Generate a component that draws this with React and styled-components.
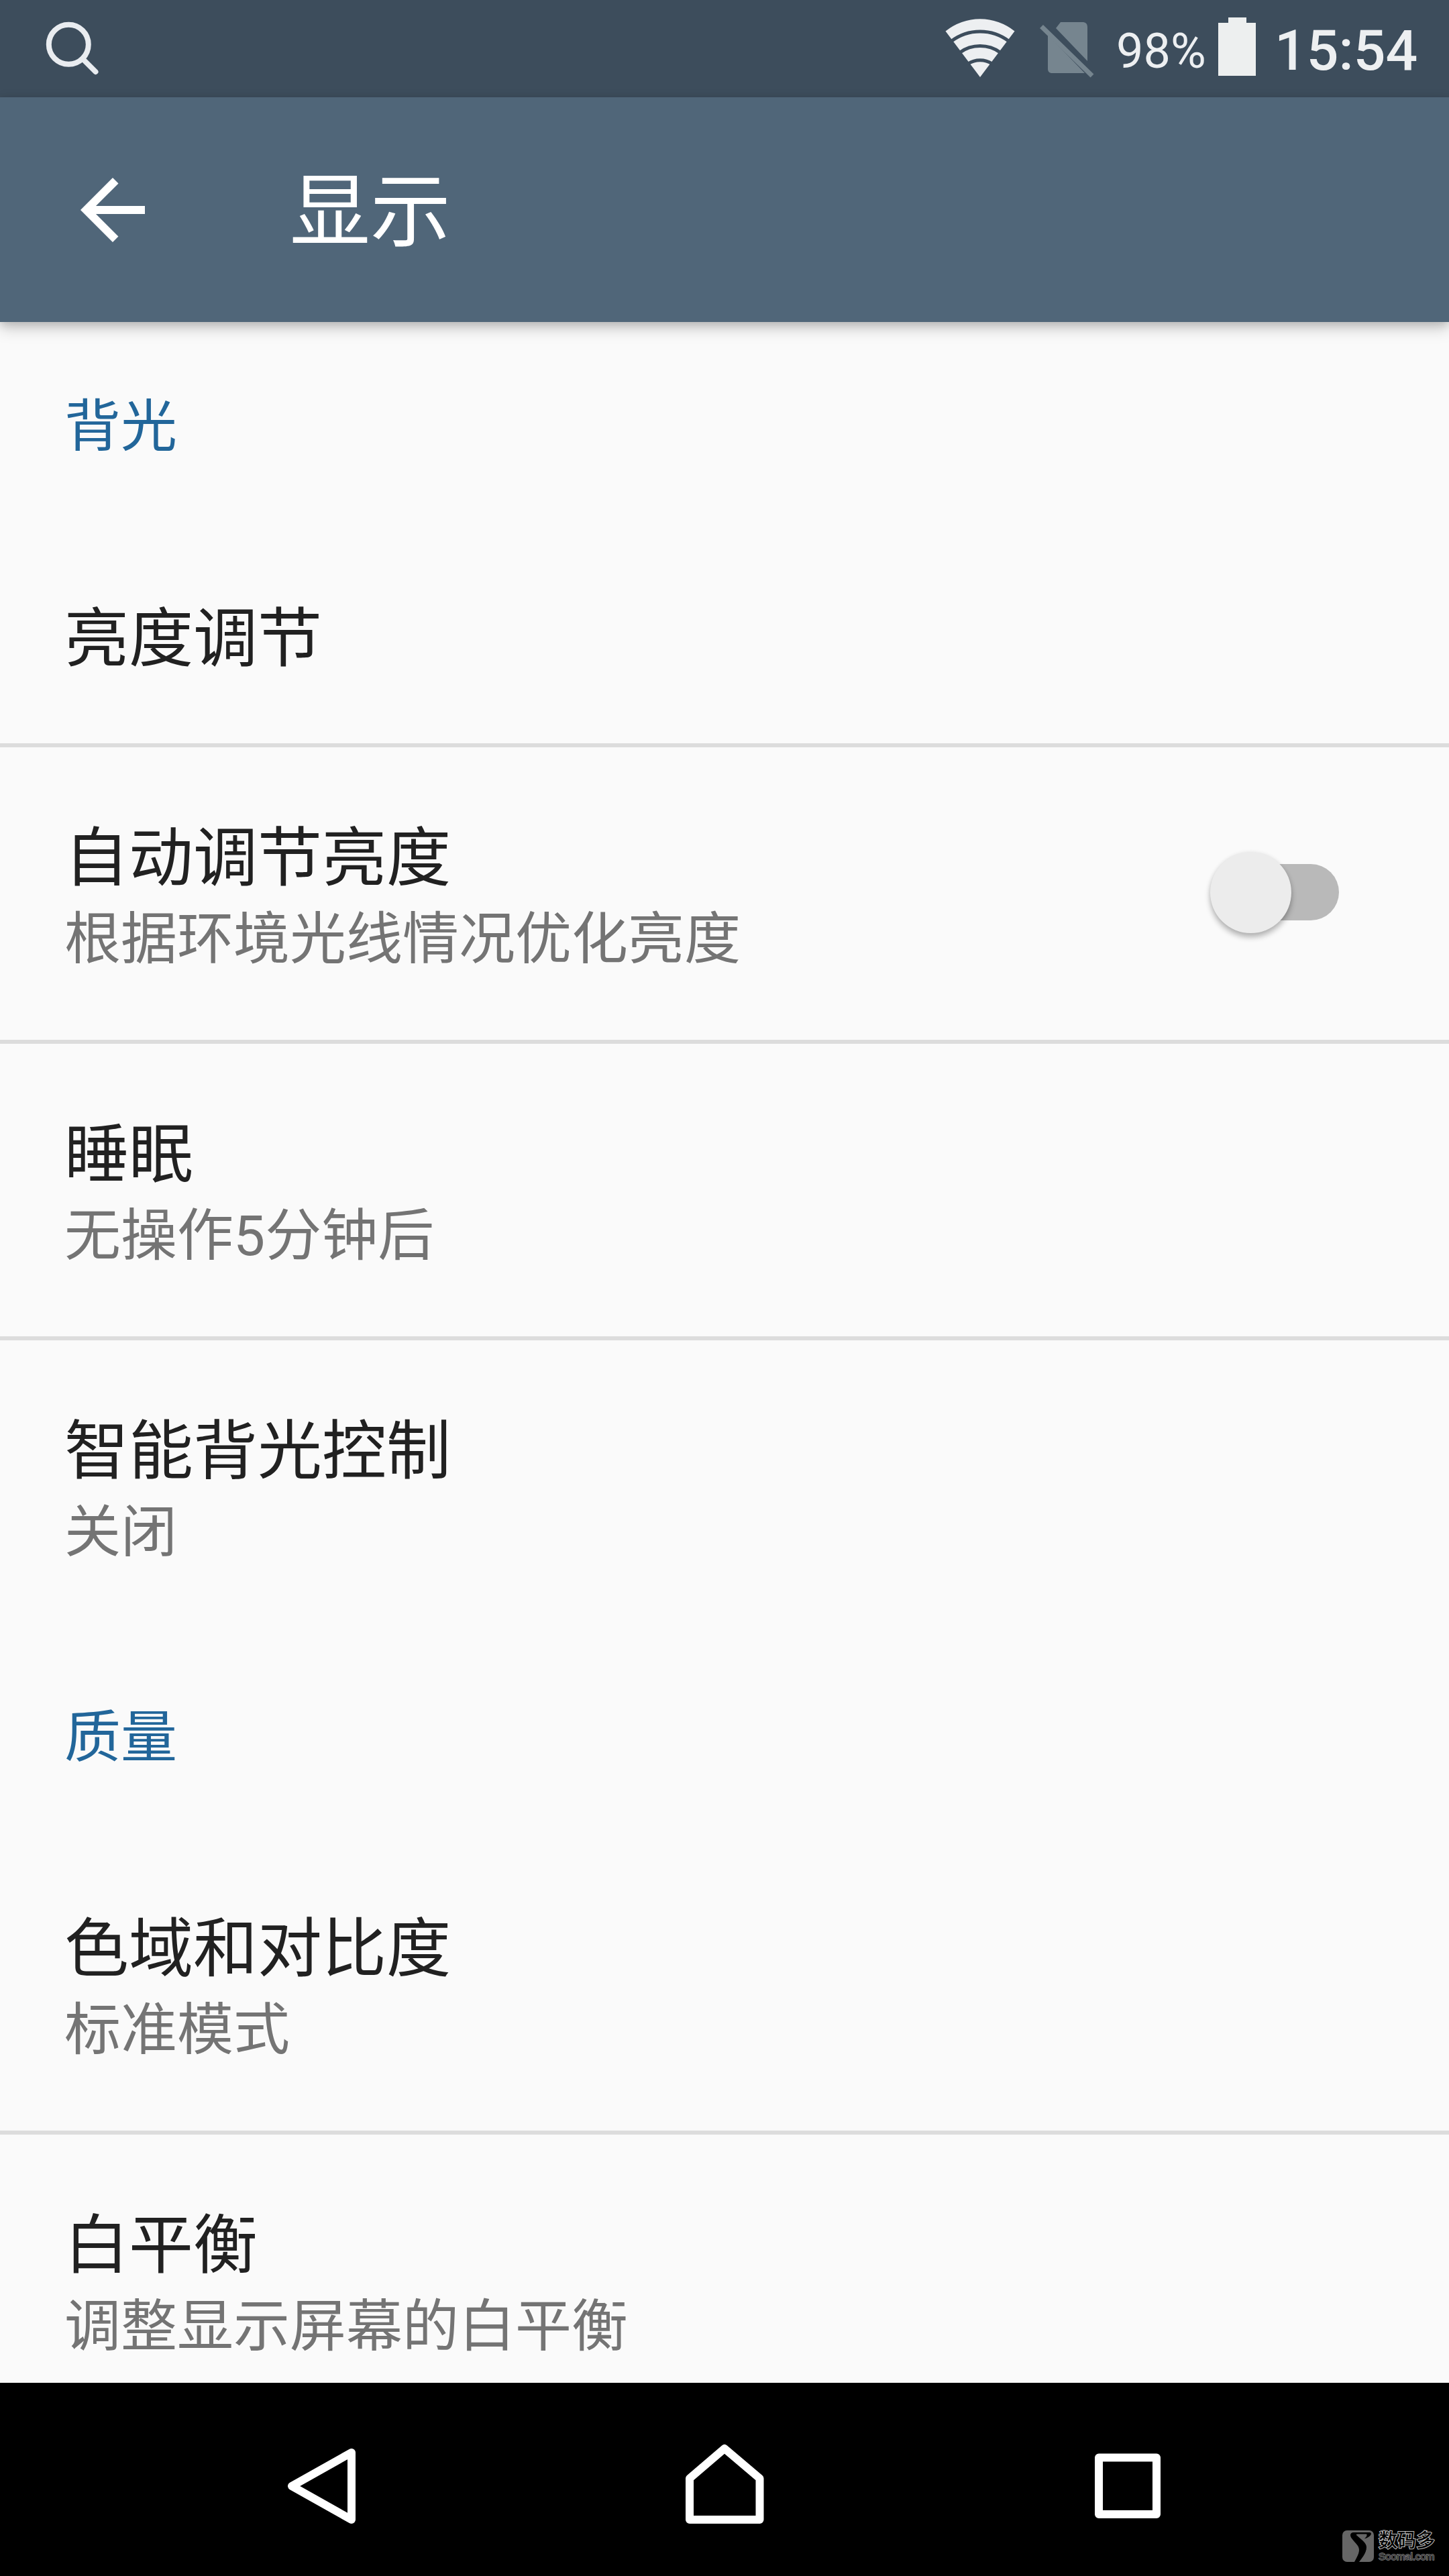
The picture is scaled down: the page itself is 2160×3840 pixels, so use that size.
import React from "react";
import styled, { createGlobalStyle } from "styled-components";

const Global = createGlobalStyle`
  * { box-sizing: border-box; }
  html, body { margin: 0; padding: 0; background: #fafafa; }
`;

const Screen = styled.div`
  width: 2160px;
  height: 3840px;
  display: flex;
  flex-direction: column;
  overflow: hidden;
  background: #fafafa;
  font-family: Roboto, "Noto Sans CJK SC", sans-serif;
`;

const StatusBar = styled.div`
  height: 145px;
  flex: none;
  display: flex;
  align-items: flex-start;
  background: #3d4d5c;
  color: #edeff1;
`;

const StatusIcon = styled.svg`
  display: block;
  flex: none;
  width: ${(p) => p.$w}px;
  height: 145px;
  margin-left: ${(p) => p.$ml || 0}px;
`;

const Spacer = styled.div`
  flex: 1;
`;

const Battery = styled.span`
  width: 136px;
  margin-left: 31px;
  font-size: 72px;
  line-height: 145px;
  padding-top: 4px;
  white-space: nowrap;
`;

const Clock = styled.span`
  width: 276px;
  padding: 3px 0 0 16px;
  font-size: 84px;
  font-weight: 500;
  line-height: 145px;
  white-space: nowrap;
`;

const AppBar = styled.header`
  position: relative;
  height: 335px;
  flex: none;
  display: flex;
  align-items: center;
  background: #506679;
  color: #fff;
  box-shadow: 0 4px 12px rgba(0, 0, 0, 0.14), 0 10px 22px rgba(0, 0, 0, 0.18);
`;

const BackArrow = styled.svg`
  display: block;
  width: 144px;
  height: 144px;
  margin-left: 96px;
`;

const Title = styled.h1`
  margin: 0 0 0 192px;
  padding-top: 8px;
  font-size: 120px;
  font-weight: 400;
  line-height: 140px;
`;

const List = styled.main`
  flex: 1;
  min-height: 0;
  overflow: hidden;
  display: flex;
  flex-direction: column;
`;

const SectionHeader = styled.h2`
  flex: none;
  height: ${(p) => p.$h}px;
  margin: 0;
  padding: 97px 96px 0;
  color: #22669a;
  font-size: 84px;
  font-weight: 400;
  line-height: 120px;
`;

const Row = styled.div`
  flex: none;
  height: ${(p) => p.$h}px;
  display: flex;
  align-items: center;
  justify-content: space-between;
  padding: 0 164px 0 96px;
  border-bottom: ${(p) => (p.$divider ? 6 : 0)}px solid #dcdcdc;
`;

const Texts = styled.div`
  display: flex;
  flex-direction: column;
  padding-top: 14px;
`;

const RowTitle = styled.div`
  color: #212121;
  font-size: 96px;
  line-height: 124px;
`;

const Summary = styled.div`
  color: #747474;
  font-size: 84px;
  line-height: 120px;
`;

const Track = styled.div`
  width: 180px;
  height: 84px;
  margin-bottom: 4px;
  border-radius: 42px;
  background: #b9b9b9;
  display: flex;
  align-items: center;
`;

const Thumb = styled.div`
  flex: none;
  width: 121px;
  height: 121px;
  margin-left: -12px;
  border-radius: 50%;
  background: #ececec;
  box-shadow: 0 6px 9px rgba(0, 0, 0, 0.28), 0 0 6px rgba(0, 0, 0, 0.06);
`;

const NavBar = styled.nav`
  position: relative;
  flex: none;
  height: 288px;
  padding: 0 180px;
  background: #000;
  display: grid;
  grid-template-columns: repeat(3, 600px);
  justify-items: center;
`;

const NavIcon = styled.svg`
  display: block;
  width: 144px;
  height: 288px;
`;

const Watermark = styled.div`
  position: absolute;
  right: 17px;
  bottom: 21px;
  height: 47px;
  display: flex;
  gap: 7px;
`;

const WatermarkText = styled.div`
  width: 88px;
  display: flex;
  flex-direction: column;
  white-space: nowrap;
  font-family: "Liberation Sans", "Noto Sans CJK SC", sans-serif;
  paint-order: stroke fill;
`;

const WatermarkName = styled.span`
  color: #000;
  -webkit-text-stroke: 2px #c4c4c4;
  font-size: 28px;
  font-weight: 500;
  line-height: 32px;
`;

const WatermarkSite = styled.span`
  color: #2c2c2c;
  -webkit-text-stroke: 1.4px #8c8c8c;
  font-size: 15.5px;
  letter-spacing: -0.3px;
  line-height: 13px;
`;

function Item({ title, summary, height = 442, divider = true, children }) {
  return (
    <Row $h={height} $divider={divider}>
      <Texts>
        <RowTitle>{title}</RowTitle>
        {summary && <Summary>{summary}</Summary>}
      </Texts>
      {children}
    </Row>
  );
}

export default function App() {
  return (
    <Screen>
      <Global />
      <StatusBar>
        <StatusIcon $w={100} $ml={60} viewBox="60 0 100 145">
          <circle cx="102.3" cy="66.3" r="29.5" fill="none" stroke="#e9ecf0" strokeWidth="8" />
          <path d="M123 87.5L142.500 107" stroke="#e9ecf0" strokeWidth="8" strokeLinecap="round" />
        </StatusIcon>
        <Spacer />
        <StatusIcon $w={104} viewBox="1409 0 104 145">
          <path d="M1461 115L1409.500 46.500A82 82 0 0 1 1512.500 46.500Z" fill="#edeff1" />
          <g fill="none" stroke="#3d4d5c" strokeWidth="5">
            <path d="M1418 61.500A71 71 0 0 1 1504 61.500" />
            <path d="M1430.500 78.500A52 52 0 0 1 1491.500 78.500" />
            <path d="M1443 95A33 33 0 0 1 1479 95" />
          </g>
        </StatusIcon>
        <StatusIcon $w={84} $ml={36} viewBox="1549 0 84 145">
          <path
            d="M1581 33H1615Q1621 34 1621 40V91L1574 42ZM1562 52L1617 109H1567Q1562 108 1562 103Z"
            fill="#76858f"
          />
          <path d="M1552.500 39.500L1628 113" stroke="#76858f" strokeWidth="7" />
        </StatusIcon>
        <Battery>98%</Battery>
        <StatusIcon $w={84} viewBox="1800 0 84 145">
          <path d="M1816 34H1831V26H1858V34H1872V113H1816Z" fill="#edefef" />
        </StatusIcon>
        <Clock>15:54</Clock>
      </StatusBar>

      <AppBar>
        <BackArrow viewBox="0 0 24 24">
          <path d="M20 11H7.830l5.590-5.590L12 4l-8 8 8 8 1.410-1.410L7.830 13H20v-2z" fill="#fff" />
        </BackArrow>
        <Title>显示</Title>
      </AppBar>

      <List>
        <SectionHeader $h={301}>背光</SectionHeader>
        <Item title="亮度调节" height={333} />
        <Item title="自动调节亮度" summary="根据环境光线情况优化亮度">
          <Track>
            <Thumb />
          </Track>
        </Item>
        <Item title="睡眠" summary="无操作5分钟后" />
        <Item title="智能背光控制" summary="关闭" height={436} divider={false} />
        <SectionHeader $h={306}>质量</SectionHeader>
        <Item title="色域和对比度" summary="标准模式" />
        <Item title="白平衡" summary="调整显示屏幕的白平衡" />
      </List>

      <NavBar>
        <NavIcon viewBox="408 3552 144 288">
          <path d="M524 3656V3756L435 3706Z" fill="none" stroke="#fff" strokeWidth="12" strokeLinejoin="round" />
        </NavIcon>
        <NavIcon viewBox="1008 3552 144 288">
          <path
            d="M1080 3650L1132.500 3694.500V3756H1028V3694.500Z"
            fill="none"
            stroke="#fff"
            strokeWidth="12"
            strokeLinejoin="round"
          />
        </NavIcon>
        <NavIcon viewBox="1608 3552 144 288">
          <rect x="1638" y="3663.500" width="86" height="84.500" fill="none" stroke="#fff" strokeWidth="12" strokeLinejoin="round" />
        </NavIcon>
        <Watermark>
          <svg width="47" height="47" viewBox="0 0 47 47">
            <rect width="47" height="47" rx="7" fill="#666" />
            <path
              d="M41 3H17C11 3 11 8 14 12C20 20 25 23 25 29C25 35 21 41 18 47H25C32 38 36 32 36 25C36 18 26 12 21 7Q20 5.500 23 5.500H36Q38 8 33 12.500Q41 10 43 5.500Q43 3 41 3Z"
              fill="#000"
            />
          </svg>
          <WatermarkText>
            <WatermarkName>数码多</WatermarkName>
            <WatermarkSite>Soomal.com</WatermarkSite>
          </WatermarkText>
        </Watermark>
      </NavBar>
    </Screen>
  );
}
